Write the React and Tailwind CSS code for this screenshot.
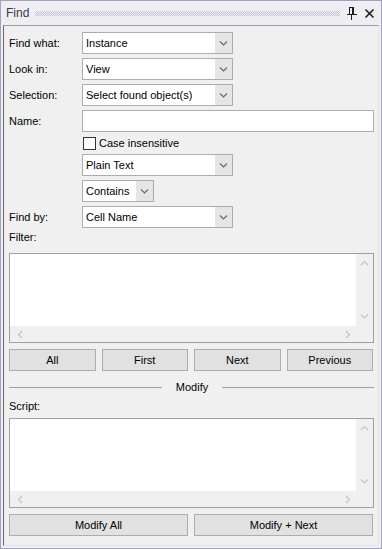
import React from "react";

const Chevron = ({ dir = "down", color = "#6a6a6a" }) => {
  const d = {
    down: "M1 1.5l3.5 3.5 3.5-3.5",
    up: "M1 5l3.5-3.5 3.5 3.5",
    left: "M5 1L1.5 4.5 5 8",
    right: "M2 1l3.5 3.5L2 8",
  }[dir];
  const vertical = dir === "down" || dir === "up";
  return (
    <svg
      width={vertical ? 9 : 7}
      height={vertical ? 7 : 9}
      viewBox={vertical ? "0 0 9 7" : "0 0 7 9"}
      fill="none"
      stroke={color}
      strokeWidth="1.2"
    >
      <path d={d} />
    </svg>
  );
};

const Combo = ({ value, width = "w-[151px]" }) => (
  <div className={`flex h-[22px] border border-[#acacac] bg-white ${width}`}>
    <div className="flex-1 flex items-center pl-[3px] whitespace-nowrap">{value}</div>
    <div className="w-[17px] bg-[#e5e5e5] flex items-center justify-center">
      <Chevron />
    </div>
  </div>
);

const Row = ({ label, children }) => (
  <div className="flex items-center h-[22px]">
    <div className="w-[73px] shrink-0">{label}</div>
    {children}
  </div>
);

const TextArea = () => (
  <div className="h-[90px] border border-[#a0a0a0] flex flex-col bg-[#f0f0f0]">
    <div className="flex flex-1">
      <div className="flex-1 bg-white" />
      <div className="w-[17px] flex flex-col items-center justify-between py-[6px]">
        <Chevron dir="up" color="#c2c2c2" />
        <Chevron dir="down" color="#c2c2c2" />
      </div>
    </div>
    <div className="h-[16px] flex items-center justify-between pl-[7px] pr-[22px]">
      <Chevron dir="left" color="#c2c2c2" />
      <Chevron dir="right" color="#c2c2c2" />
    </div>
  </div>
);

const Button = ({ children }) => (
  <div className="flex-1 h-[22px] border border-[#adadad] bg-[#e1e1e1] flex items-center justify-center">
    {children}
  </div>
);

export default function App() {
  return (
    <div className="w-[382px] h-[549px] border border-[#9ea2c0] bg-[#f0f0f0] flex flex-col font-['Liberation_Sans',Arial,sans-serif] text-[11px] text-black leading-none">
      {/* title bar */}
      <div className="h-[24px] bg-[#eeeef2] flex items-center pl-[5px] pr-[6px] shrink-0">
        <span className="text-[12px] text-[#3a3a48]">Find</span>
        <div className="flex-1 h-[5px] mx-[6px] bg-[repeating-conic-gradient(#c4c4cc_0_25%,transparent_0_50%)] bg-[length:2px_2px]" />
        <svg width="12" height="14" viewBox="0 0 12 14" className="mr-[6px]">
          <rect x="3.5" y="1.5" width="4" height="7" fill="none" stroke="#1e1e1e" />
          <rect x="6" y="2" width="2" height="6" fill="#1e1e1e" />
          <rect x="1" y="8" width="10" height="1" fill="#1e1e1e" />
          <rect x="5" y="9" width="1" height="5" fill="#1e1e1e" />
        </svg>
        <svg width="11" height="11" viewBox="0 0 11 11">
          <path d="M1.5 1.5l8 8M9.5 1.5l-8 8" stroke="#1e1e1e" strokeWidth="1.6" />
        </svg>
      </div>

      {/* content */}
      <div className="flex-1 mx-[2px] mb-[2px] border border-t-[#a0a0a0] border-l-[#696969] border-r-[#e3e3e3] border-b-[#e3e3e3] pl-[5px] pr-[4px] pt-[6px] flex flex-col">
        <div className="flex flex-col gap-[4px]">
          <Row label="Find what:">
            <Combo value="Instance" />
          </Row>
          <Row label="Look in:">
            <Combo value="View" />
          </Row>
          <Row label="Selection:">
            <Combo value="Select found object(s)" />
          </Row>
        </div>
        <div className="flex items-center h-[22px] mt-[4px]">
          <div className="w-[73px] shrink-0">Name:</div>
          <div className="flex-1 h-[22px] border border-[#acacac] bg-white" />
        </div>
        <div className="flex items-center h-[13px] mt-[5px] pl-[74px]">
          <div className="w-[13px] h-[13px] border border-[#333] bg-white mr-[3px]" />
          <span>Case insensitive</span>
        </div>
        <div className="flex flex-col gap-[4px] mt-[4px]">
          <Row label="">
            <Combo value="Plain Text" />
          </Row>
          <Row label="">
            <Combo value="Contains" width="w-[72px]" />
          </Row>
          <Row label="Find by:">
            <Combo value="Cell Name" />
          </Row>
        </div>

        <div className="h-[14px] mt-[2px] flex items-center">Filter:</div>
        <div className="mt-[9px]">
          <TextArea />
        </div>
        <div className="flex gap-[6px] mt-[6px] pr-[1px]">
          <Button>All</Button>
          <Button>First</Button>
          <Button>Next</Button>
          <Button>Previous</Button>
        </div>

        <div className="flex items-center h-[14px] mt-[9px]">
          <div className="w-[153px] h-px bg-[#a0a0a0]" />
          <div className="flex-1 text-center">Modify</div>
          <div className="w-[152px] h-px bg-[#a0a0a0]" />
        </div>
        <div className="h-[14px] mt-[5px] flex items-center">Script:</div>
        <div className="mt-[5px]">
          <TextArea />
        </div>
        <div className="flex gap-[6px] mt-[6px] pr-[1px]">
          <Button>Modify All</Button>
          <Button>Modify + Next</Button>
        </div>
      </div>
    </div>
  );
}
